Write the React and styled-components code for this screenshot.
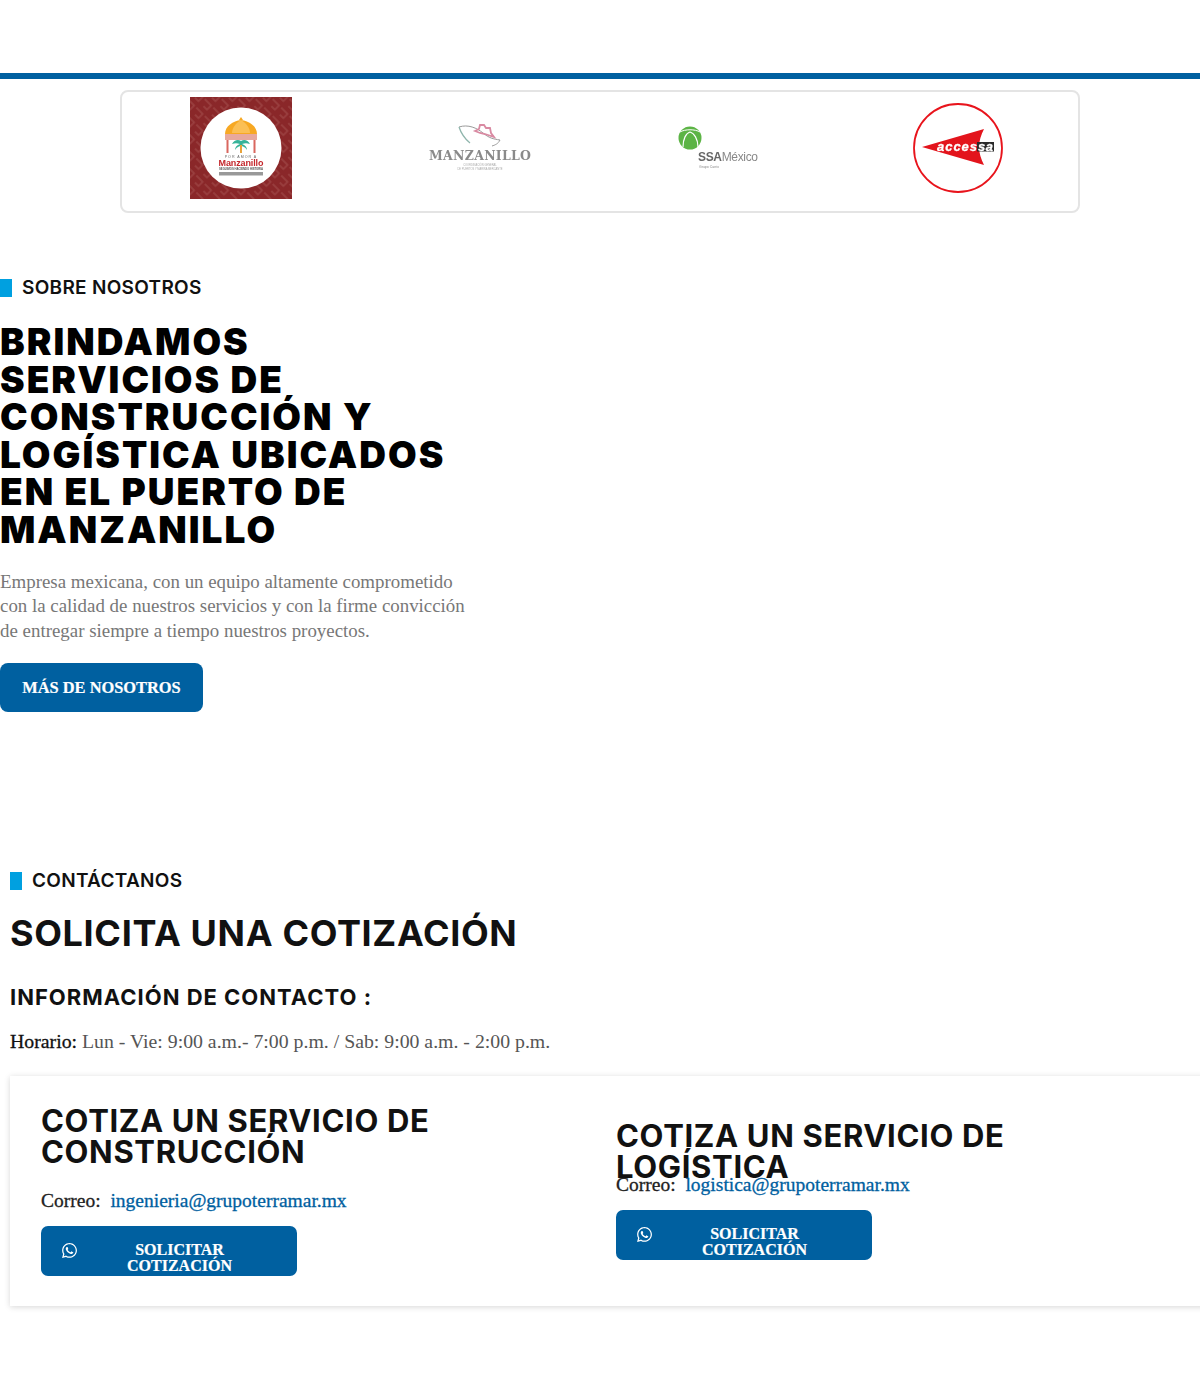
import styled, { createGlobalStyle } from "styled-components";
import { FaWhatsapp } from "react-icons/fa";

const BLUE = "#0060a0";
const SKY = "#00a0e0";
const HEAD = "Inter, 'Liberation Sans', sans-serif";
const BODY = "'Liberation Serif', serif";

const GlobalStyle = createGlobalStyle`
  * { box-sizing: border-box; }
  html, body { margin: 0; padding: 0; background: #fff; }
  body { font-family: ${BODY}; color: #111; }
`;

const Page = styled.div`
  width: 1200px;
  height: 1382px;
  overflow: hidden;
`;

const TopBar = styled.div`
  height: 79px;
  border-bottom: 6px solid ${BLUE};
`;

const LogoStrip = styled.div`
  width: 960px;
  height: 123px;
  margin: 11px auto 0;
  padding: 0 1px 8px 0;
  border: 2px solid #e4e4e4;
  border-radius: 8px;
  display: grid;
  grid-template-columns: repeat(4, 1fr);
  align-items: center;
  justify-items: center;
`;

const LogoSvg = styled.svg`
  display: block;
  filter: blur(0.35px);
`;

const About = styled.section`
  margin-top: 65px;
`;

const Eyebrow = styled.div`
  display: flex;
  align-items: center;
  gap: 10px;
  height: 19px;
  font-family: ${HEAD};
  font-weight: 600;
  font-size: 19px;
  letter-spacing: 0.3px;
  color: #111;
  &::before {
    content: "";
    width: 12px;
    height: 18px;
    background: ${SKY};
  }
`;

const MainTitle = styled.h1`
  margin: 26px 0 0;
  font-family: ${HEAD};
  font-weight: 900;
  font-size: 37px;
  line-height: 37.6px;
  letter-spacing: 2px;
  color: #000;
`;

const Lead = styled.p`
  margin: 21px 0 0;
  width: 480px;
  font-size: 18.9px;
  line-height: 24.5px;
  color: #777;
`;

const PrimaryButton = styled.a`
  display: flex;
  align-items: center;
  justify-content: center;
  width: 203px;
  height: 49px;
  margin-top: 20px;
  background: ${BLUE};
  border-radius: 8px;
  color: #fff;
  font-weight: 700;
  font-size: 16.4px;
  -webkit-text-stroke: 0.2px #fff;
`;

const Contact = styled.section`
  margin-top: 159px;
  padding-left: 10px;
`;

const ContactTitle = styled.h2`
  margin: 23px 0 0;
  font-family: ${HEAD};
  font-weight: 700;
  font-size: 36px;
  line-height: 40px;
  letter-spacing: 0.65px;
  color: #111;
`;

const ContactSub = styled.h3`
  margin: 31px 0 0;
  font-family: ${HEAD};
  font-weight: 700;
  font-size: 22px;
  line-height: 26px;
  letter-spacing: 1px;
  color: #111;
`;

const Hours = styled.p`
  margin: 18px 0 0;
  font-size: 19.8px;
  line-height: 26px;
  color: #555;
  strong { color: #111; font-weight: 400; -webkit-text-stroke: 0.3px #111; }
`;

const QuoteCard = styled.div`
  margin-top: 22px;
  width: 1215px;
  height: 230px;
  background: #fff;
  box-shadow: 0 1px 6px rgba(0, 0, 0, 0.16);
  display: grid;
  grid-template-columns: 575px 1fr;
  padding-left: 31px;
`;

const QuoteColumn = styled.div`
  padding-top: ${(p) => p.$top}px;
`;

const QuoteTitle = styled.h4`
  margin: 0;
  width: 440px;
  font-family: ${HEAD};
  font-weight: 700;
  font-size: 31px;
  line-height: 30.5px;
  letter-spacing: 0.65px;
  color: #111;
`;

const MailRow = styled.p`
  margin: ${(p) => p.$gap}px 0 0;
  height: 24px;
  font-size: 19.5px;
  line-height: 24px;
  color: #222;
  -webkit-text-stroke: 0.3px currentColor;
  a {
    color: ${BLUE};
    margin-left: 5px;
  }
`;

const QuoteButton = styled.a`
  position: relative;
  display: block;
  width: 256px;
  height: 50px;
  margin-top: 13px;
  padding: 16px 0 0 21px;
  background: ${BLUE};
  border-radius: 7px;
  color: #fff;
  text-align: center;
  font-weight: 700;
  font-size: 16px;
  line-height: 16px;
  -webkit-text-stroke: 0.2px #fff;
  overflow: hidden;
  span { display: block; }
  svg {
    position: absolute;
    left: 20px;
    top: 16px;
  }
`;

const MaroonLogo = () => (
  <LogoSvg width="102" height="102" viewBox="0 0 102 102">
    <defs>
      <pattern id="greca" width="12" height="12" patternUnits="userSpaceOnUse" patternTransform="rotate(45)">
        <rect width="12" height="12" fill="#8a2729" />
        <path d="M0 3h9v6H4" fill="none" stroke="#9c4242" strokeWidth="1.4" />
      </pattern>
    </defs>
    <rect width="102" height="102" fill="url(#greca)" />
    <circle cx="51" cy="51" r="40.5" fill="#fff" />
    <path d="M35 37c0-8 8-13 16-14 8 1 16 6 16 14z" fill="#f7a823" />
    <path d="M42 36c0-5 4-10 9-13 5 3 9 8 9 13z" fill="#fbbf55" />
    <path d="M51 20l2 3h-4z" fill="#f7a823" />
    <path d="M35 37h32v6H35z" fill="#e8a89c" />
    <path d="M37.500 43v13M64.500 43v13" stroke="#d9675f" strokeWidth="2" />
    <path d="M51 44c-3-2-7-1-9 3 3-1 5-1 8 0-3 1-5 3-5 6 2-3 4-4 6-4 2 0 4 1 6 4 0-3-2-5-5-6 3-1 5-1 8 0-2-4-6-5-9-3z" fill="#35b39a" />
    <path d="M51 48v8" stroke="#e8a33a" strokeWidth="2" />
    <text x="51" y="60.500" textAnchor="middle" fontFamily="Liberation Sans" fontSize="3.600" letterSpacing="1" fill="#666">POR AMOR A</text>
    <text x="51" y="68.500" textAnchor="middle" fontFamily="Liberation Sans" fontWeight="700" fontSize="9" fill="#c4272c" textLength="45">Manzanillo</text>
    <text x="51" y="73" textAnchor="middle" fontFamily="Liberation Sans" fontWeight="700" fontSize="2.800" fill="#555" textLength="44">SEGUIMOS HACIENDO HISTORIA</text>
    <rect x="29" y="75" width="44" height="3.500" fill="#999" />
  </LogoSvg>
);

const ShipLogo = () => (
  <LogoSvg width="104" height="50" viewBox="0 0 104 50">
    <path d="M31 4c9-3 18 1 24 6s10 6 17 7c-2 4-5 5-8 6" fill="none" stroke="#999" strokeWidth="1" />
    <path d="M31 4c2 6 6 12 11 16" fill="none" stroke="#8fb5ac" strokeWidth="1.300" />
    <path d="M47 8l4-2 1-4h4l2 3h4l1 5 3 4-9-3-5-1z" fill="none" stroke="#d98aa2" strokeWidth="1.800" />
    <text x="52" y="37" textAnchor="middle" fontFamily="DejaVu Serif" fontWeight="700" fontSize="12.500" fill="#8a8a8a" textLength="102">MANZANILLO</text>
    <text x="52" y="42.500" textAnchor="middle" fontFamily="Liberation Sans" fontSize="2.600" fill="#aaa">COORDINACIÓN GENERAL</text>
    <text x="52" y="46.500" textAnchor="middle" fontFamily="Liberation Sans" fontSize="2.600" fill="#aaa">DE PUERTOS Y MARINA MERCANTE</text>
  </LogoSvg>
);

const SsaLogo = () => (
  <LogoSvg width="84" height="46" viewBox="0 0 84 46">
    <circle cx="13" cy="13" r="11.500" fill="#5cb445" />
    <path d="M6 22c0-8 3-14 7-15 4 1 8 7 8 15" fill="none" stroke="#fff" strokeWidth="1.200" />
    <path d="M3 7c5-3 15-3 20 0" fill="none" stroke="#fff" strokeWidth="1" />
    <text x="21" y="36" fontFamily="Liberation Sans" fontSize="12" fill="#888" textLength="60">
      <tspan fontWeight="700" fill="#666">SSA</tspan>México
    </text>
    <text x="22" y="43" fontFamily="Liberation Sans" fontSize="3.500" fill="#888">Grupo Carrix</text>
  </LogoSvg>
);

const AccessaLogo = () => (
  <LogoSvg width="92" height="92" viewBox="0 0 92 92">
    <circle cx="46" cy="46" r="44" fill="#fff" stroke="#e8141c" strokeWidth="1.800" />
    <path d="M10 45l62-18c-3 6-5 12-5 18s2 12 5 18z" fill="#e3141c" />
    <rect x="65" y="40" width="17" height="9.500" fill="#2a2a2a" />
    <text x="25" y="49" fontFamily="Liberation Sans" fontWeight="700" fontStyle="italic" fontSize="13" fill="#fff" stroke="#fff" strokeWidth="0.3" textLength="40">acces</text>
    <text x="66" y="49" fontFamily="Liberation Sans" fontWeight="700" fontStyle="italic" fontSize="13" fill="#fff" stroke="#fff" strokeWidth="0.3" textLength="15">sa</text>
  </LogoSvg>
);

const Quote = ({ title, email, top, gap }) => (
  <QuoteColumn $top={top}>
    <QuoteTitle>{title}</QuoteTitle>
    <MailRow $gap={gap}>
      Correo: <a>{email}</a>
    </MailRow>
    <QuoteButton>
      <FaWhatsapp size={17} />
      <span>SOLICITAR</span>
      <span>COTIZACIÓN</span>
    </QuoteButton>
  </QuoteColumn>
);

export default function App() {
  return (
    <Page>
      <GlobalStyle />
      <TopBar />
      <LogoStrip>
        <MaroonLogo />
        <ShipLogo />
        <SsaLogo />
        <AccessaLogo />
      </LogoStrip>

      <About>
        <Eyebrow>SOBRE NOSOTROS</Eyebrow>
        <MainTitle>
          BRINDAMOS
          <br />
          SERVICIOS DE
          <br />
          CONSTRUCCIÓN Y
          <br />
          LOGÍSTICA UBICADOS
          <br />
          EN EL PUERTO DE
          <br />
          MANZANILLO
        </MainTitle>
        <Lead>
          Empresa mexicana, con un equipo altamente comprometido
          <br />
          con la calidad de nuestros servicios y con la firme convicción
          <br />
          de entregar siempre a tiempo nuestros proyectos.
        </Lead>
        <PrimaryButton>MÁS DE NOSOTROS</PrimaryButton>
      </About>

      <Contact>
        <Eyebrow>CONTÁCTANOS</Eyebrow>
        <ContactTitle>SOLICITA UNA COTIZACIÓN</ContactTitle>
        <ContactSub>INFORMACIÓN DE CONTACTO :</ContactSub>
        <Hours>
          <strong>Horario:</strong> Lun - Vie: 9:00 a.m.- 7:00 p.m. / Sab: 9:00 a.m. - 2:00 p.m.
        </Hours>
        <QuoteCard>
          <Quote
            title="COTIZA UN SERVICIO DE CONSTRUCCIÓN"
            email="ingenieria@grupoterramar.mx"
            top={30}
            gap={22}
          />
          <Quote
            title="COTIZA UN SERVICIO DE LOGÍSTICA"
            email="logistica@grupoterramar.mx"
            top={45}
            gap={-9}
          />
        </QuoteCard>
      </Contact>
    </Page>
  );
}
